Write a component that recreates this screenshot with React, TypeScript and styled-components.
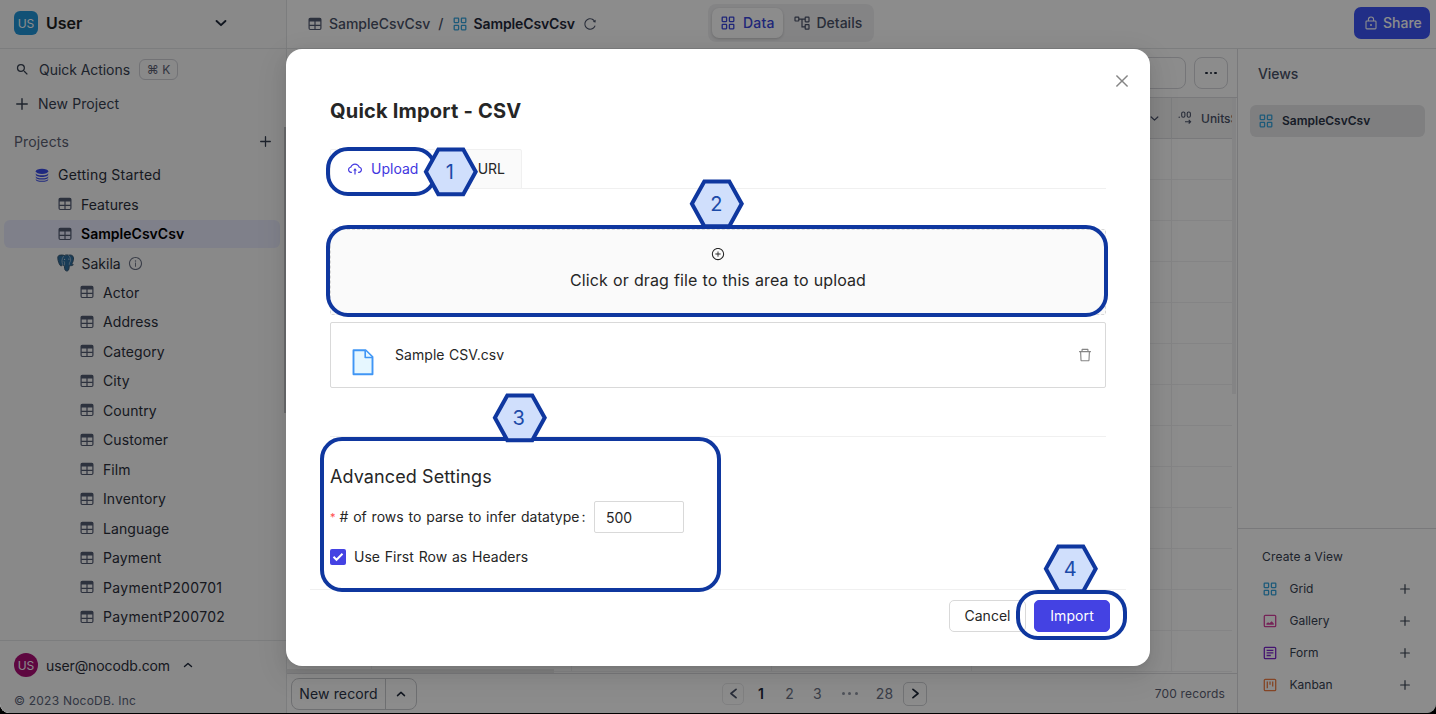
import React from 'react';
import styled, { createGlobalStyle } from 'styled-components';
import {
  AiOutlineCloudUpload,
  AiOutlineDelete,
  AiOutlineClose,
  AiOutlinePlusCircle,
  AiOutlineReload,
  AiOutlineInfoCircle,
} from 'react-icons/ai';
import { MdSearch } from 'react-icons/md';

const GlobalStyle = createGlobalStyle`
  * { box-sizing: border-box; }
  html, body { margin: 0; background: #000; }
  body { font-family: Inter, "Liberation Sans", sans-serif; font-size: 14px; color: #1f293a; overflow: hidden; }
  svg { display: block; flex: none; }
`;

/* ---------- icons ---------- */

type IconProps = { size?: number; color?: string };

const TableIcon = ({ size = 14, color = '#535b72' }: IconProps) => (
  <svg width={size} height={size} viewBox="0 0 14 14" fill="none">
    <rect x="1.1" y="1.4" width="11.8" height="11.1" rx="1.2" stroke={color} strokeWidth="1.2" />
    <path d="M1 2.2C1 1.5 1.5 1 2.2 1h9.6c.7 0 1.2.5 1.2 1.2v2.2H1z" fill={color} />
    <path d="M1.2 8.4h11.6M7 4v8.4" stroke={color} strokeWidth="1.2" />
  </svg>
);

const GridIcon = ({ size = 14, color = '#36a4dd' }: IconProps) => (
  <svg width={size} height={size} viewBox="0 0 14 14" fill="none" stroke={color} strokeWidth="1.3">
    <rect x="1.2" y="1.2" width="4.4" height="4.4" rx=".5" />
    <rect x="8.4" y="1.2" width="4.4" height="4.4" rx=".5" />
    <rect x="1.2" y="8.4" width="4.4" height="4.4" rx=".5" />
    <rect x="8.4" y="8.4" width="4.4" height="4.4" rx=".5" />
  </svg>
);

const TreeIcon = ({ color = '#4a5268' }: IconProps) => (
  <svg width="16" height="14" viewBox="0 0 16 14" fill="none" stroke={color} strokeWidth="1.2">
    <rect x="1" y="1.2" width="3.8" height="3.8" rx=".5" />
    <rect x="11.2" y="1.2" width="3.8" height="4.6" rx=".5" />
    <rect x="11.2" y="8.6" width="3.8" height="4.6" rx=".5" />
    <path d="M4.8 3.2h6.4M8 3.2v7.6h3.2" />
  </svg>
);

const Plus = ({ size = 11, color = '#374151' }: IconProps) => (
  <svg width={size} height={size} viewBox="0 0 11 11" stroke={color} strokeWidth="1.3" strokeLinecap="round">
    <path d="M5.5.7v9.6M.7 5.5h9.6" />
  </svg>
);

const chevronPaths = {
  down: 'M1.300 3.300l3.700 3.500 3.700-3.500',
  up: 'M1.500 6.600L5 3.400l3.500 3.200',
  left: 'M7.300 1.200L2.700 5l4.600 3.800',
  right: 'M2.700 1.200L7.300 5 2.700 8.800',
};

type ChevronProps = { dir?: keyof typeof chevronPaths; width?: number; color?: string; weight?: number };

const Chevron = ({ dir = 'down', width = 10, color = '#1f293a', weight = 1.6 }: ChevronProps) => (
  <svg width={width} height={width} viewBox="0 0 10 10" fill="none" stroke={color} strokeWidth={weight} strokeLinecap="round" strokeLinejoin="round">
    <path d={chevronPaths[dir]} />
  </svg>
);

const Database = () => (
  <svg width="14" height="14" viewBox="0 0 14 14" fill="#3a4be8">
    <ellipse cx="7" cy="3.300" rx="6.200" ry="2.600" />
    <path d="M.8 4.900c0 1.600 2.800 2.300 6.200 2.300s6.200-.7 6.200-2.300v1.500c0 1.500-2.800 2.500-6.200 2.500S.8 7.900.8 6.400z" />
    <path d="M.8 7.900c0 1.600 2.800 2.300 6.200 2.300s6.200-.7 6.200-2.300v1.300c0 1.500-2.800 2.400-6.200 2.400S.8 10.700.8 9.200z" />
    <path d="M.8 10.500c0 1.600 2.800 2.300 6.200 2.300s6.200-.7 6.200-2.300v.9c0 1.500-2.800 2.400-6.200 2.400s-6.200-.9-6.200-2.400z" />
  </svg>
);

const Elephant = () => (
  <svg width="17" height="18" viewBox="0 0 17 18" fill="none" strokeLinejoin="round" strokeLinecap="round">
    <path
      d="M4.200 1.200C2 .6.600 2 .8 4.300c.2 2.500 1.300 6 2.500 7.200.8.800 1.600.1 2.200-.6.500.5 1.200.6 1.800.5.300 1.900.1 4.200 1.300 5.200 1.300.9 3 .2 3.300-1.700l.4-3.300c1.400.3 3.300 0 4-.9-.8-.2-1.300-.3-1.400-.8 1.100-2 1.800-4.400 1.600-6.200C16.200 1.600 14 .5 11.700 1.200 10.300.7 8.700.8 7.500 1.500 6.400 1 5.200.9 4.200 1.200z"
      fill="#2f6e9f"
      stroke="#3a5a73"
      strokeWidth="1"
    />
    <path d="M5.600 10.500c-.9-2.500-1.100-5.600.8-8M11.800 1.500c1.700 1.600 2.500 4.300 1.400 6.200-.4.800-.9 1.200-.9 2.600M7.400 11c.1-1.500.5-2.200-.2-3.400" stroke="#b9cbd8" strokeWidth=".7" />
    <circle cx="7.600" cy="5.300" r=".6" fill="#d5e0e8" />
    <circle cx="11.900" cy="5.100" r=".6" fill="#d5e0e8" />
  </svg>
);

const Lock = () => (
  <svg width="12" height="14" viewBox="0 0 12 14" fill="none" stroke="#fff" strokeWidth="1.100">
    <rect x="1" y="5" width="10" height="7.900" rx=".8" />
    <path d="M3.400 5V3.600a2.600 2.600 0 0 1 5.200 0V5" />
    <circle cx="6" cy="9" r="1" fill="#fff" stroke="none" />
  </svg>
);

const DecimalIcon = () => (
  <svg width="14" height="14" viewBox="0 0 14 14" fill="none" stroke="#4a5268" strokeWidth="1.100">
    <circle cx="1.200" cy="6.300" r=".7" fill="#4a5268" stroke="none" />
    <rect x="3.700" y="1" width="3.200" height="5.200" rx="1.500" />
    <rect x="9.200" y="1" width="3.200" height="5.200" rx="1.500" />
    <path d="M7 10.700h5.600M10.700 8.900l1.900 1.800-1.900 1.800" />
  </svg>
);

const GalleryIcon = () => (
  <svg width="14" height="14" viewBox="0 0 14 14" fill="none">
    <rect x="1.300" y="1.300" width="11.400" height="11.400" rx="1" stroke="#d6409f" strokeWidth="1.300" />
    <path d="M3.400 10.700V9.500l1.700-1.300 1.300 1.100 2.300-2 2.100 2.200v1.200z" fill="#d6409f" />
  </svg>
);

const FormIcon = () => (
  <svg width="14" height="14" viewBox="0 0 14 14" fill="none" stroke="#7d26cd" strokeWidth="1.300">
    <rect x="1.300" y="1.300" width="11.400" height="11.400" rx="1" />
    <path d="M3.600 4.300h6.800M3.600 6.900h6.800M3.600 9.500h4.200" />
  </svg>
);

const KanbanIcon = () => (
  <svg width="14" height="14" viewBox="0 0 14 14" fill="none" stroke="#f07f45" strokeWidth="1.300">
    <rect x="1.300" y="1.300" width="11.400" height="11.400" rx="1" />
    <path d="M4.300 3.600v6.600M7 3.600v3.200M9.700 3.600v4.800" />
  </svg>
);

const FileIcon = () => (
  <svg width="22" height="27" viewBox="0 0 22 27" fill="#e6f7ff" stroke="#4096f5" strokeWidth="1.900" strokeLinejoin="round">
    <path d="M1.500 1.300h12.300l6.700 6.700v17.200h-19z" />
    <path d="M13.200 1.500v7h7" strokeWidth="1.600" />
  </svg>
);

/* ---------- page frame ---------- */

const Window = styled.div`
  position: relative;
  display: flex;
  width: 1436px;
  height: 713px;
  background: #fff;
  border-radius: 0 0 9px 9px;
  overflow: hidden;
`;

const Label = styled.span<{ ls?: number; ws?: number }>`
  white-space: nowrap;
  letter-spacing: ${(p) => p.ls ?? 0.15}px;
  word-spacing: ${(p) => p.ws ?? 0}px;
`;

/* ---------- sidebar ---------- */

const Sidebar = styled.aside`
  position: relative;
  display: flex;
  flex-direction: column;
  flex: none;
  width: 287px;
  background: #f9f9fa;
  border-right: 1px solid #e2e3e6;
`;

const Workspace = styled.div`
  display: flex;
  align-items: center;
  height: 49px;
  padding: 0 59px 2px 14px;
  border-bottom: 1px solid #e2e3e6;
  font-size: 16px;
  font-weight: 600;
  color: #1f1f1f;
  ${Label} { flex: 1; margin-left: 8px; }
`;

const Avatar = styled.div<{ round?: boolean }>`
  display: flex;
  align-items: center;
  justify-content: center;
  width: 24px;
  height: 24px;
  border-radius: ${(p) => (p.round ? '50%' : '6px')};
  background: ${(p) => (p.round ? '#ab0d76' : '#1f94d8')};
  color: #fff;
  font-size: 12px;
  font-weight: 400;
`;

const Action = styled.div<{ indent: number; gap: number; h: number }>`
  display: flex;
  align-items: center;
  gap: ${(p) => p.gap}px;
  height: ${(p) => p.h}px;
  padding-left: ${(p) => p.indent}px;
  color: #374151;
`;

const Kbd = styled.kbd`
  display: flex;
  align-items: center;
  justify-content: center;
  width: 39px;
  height: 21px;
  border: 1px solid #cfd0d6;
  border-radius: 6px;
  font: 12px Inter, "DejaVu Sans", sans-serif;
  color: #5b6072;
`;

const SectionTitle = styled.div`
  display: flex;
  align-items: center;
  justify-content: space-between;
  height: 37px;
  margin-top: 6px;
  padding: 0 15px 0 14px;
  color: #5b6072;
`;

const Tree = styled.div`
  display: flex;
  flex-direction: column;
  padding: 0.600px 6px 0 4px;
`;

const TreeRow = styled.div<{ depth: number; active?: boolean; gap?: number }>`
  display: flex;
  align-items: center;
  gap: ${(p) => p.gap ?? 9}px;
  height: 28px;
  margin-bottom: 1.470px;
  padding-left: ${(p) => p.depth}px;
  border-radius: 6px;
  background: ${(p) => (p.active ? '#e7e9fc' : 'transparent')};
  color: ${(p) => (p.active ? '#000' : '#2b2f3a')};
  font-weight: ${(p) => (p.active ? 600 : 400)};
`;

const ScrollThumb = styled.div`
  position: absolute;
  right: 0;
  top: 127px;
  width: 2px;
  height: 286px;
  background: #c4c5c9;
`;

const SidebarFooter = styled.footer`
  height: 73px;
  margin-top: auto;
  padding: 12px 14px 0;
  border-top: 1px solid #e2e3e6;
`;

const UserLine = styled.div`
  display: flex;
  align-items: center;
  gap: 8px;
  color: #2b2f3a;
  ${Label} { margin-right: 5px; }
`;

const Copyright = styled.div`
  margin-top: 16px;
  font-size: 12px;
  line-height: 15px;
  letter-spacing: 0.22px;
  color: #5b6478;
`;

/* ---------- main area ---------- */

const Main = styled.main`
  display: flex;
  flex-direction: column;
  flex: 1;
  min-width: 0;
`;

const Topbar = styled.header`
  display: grid;
  grid-template-columns: 421px 1fr auto;
  align-items: center;
  height: 49px;
  padding: 0 6px 2px 0;
  border-bottom: 1px solid #e2e3e6;
`;

const Crumbs = styled.nav`
  display: flex;
  align-items: center;
  padding: 1px 0 0 21px;
  font-weight: 500;
  color: #4a5268;
  ${Label} { margin: 0 8px 0 7px; }
  ${Label} + span { margin-right: 9px; }
`;

const CurrentCrumb = styled(Label)`
  color: #1f293a;
  font-weight: 600;
`;

const Segment = styled.div`
  display: flex;
  justify-self: start;
  width: 166px;
  height: 38px;
  padding: 4px;
  border-radius: 8px;
  background: #f1f1f3;
`;

const SegmentItem = styled.div<{ on?: boolean }>`
  display: flex;
  align-items: center;
  gap: ${(p) => (p.on ? 8 : 7)}px;
  width: ${(p) => (p.on ? '71px' : 'auto')};
  padding: 0 0 1px ${(p) => (p.on ? 9 : 10.5)}px;
  border-radius: 7px;
  font-weight: 500;
  background: ${(p) => (p.on ? '#fff' : 'transparent')};
  box-shadow: ${(p) => (p.on ? '0 1px 3px rgba(0,0,0,.2)' : 'none')};
  color: ${(p) => (p.on ? '#3a46dc' : '#4a5268')};
`;

const ShareButton = styled.button`
  display: flex;
  align-items: center;
  gap: 6px;
  width: 76px;
  height: 32px;
  padding: 0 0 1px 11px;
  border: 0;
  border-radius: 7px;
  background: #3c54f6;
  color: #fff;
  font: 500 14px Inter, sans-serif;
`;

const Body = styled.div`
  display: flex;
  flex: 1;
  min-height: 0;
`;

const GridPane = styled.section`
  display: flex;
  flex-direction: column;
  width: 950px;
`;

const Toolbar = styled.div`
  display: flex;
  align-items: center;
  justify-content: flex-end;
  gap: 8px;
  height: 48px;
  padding-right: 9px;
`;

const ToolButton = styled.div<{ w: number }>`
  display: flex;
  align-items: center;
  justify-content: ${(p) => (p.w > 40 ? 'flex-end' : 'center')};
  width: ${(p) => p.w}px;
  height: 32px;
  padding-right: ${(p) => (p.w > 40 ? 31.5 : 0)}px;
  border: 1px solid #d5d6da;
  border-radius: 8px;
  background: #fff;
`;

const Dots = styled.span<{ size: number; gap: number; color: string }>`
  display: flex;
  gap: ${(p) => p.gap}px;
  i { width: ${(p) => p.size}px; height: ${(p) => p.size}px; border-radius: 50%; background: ${(p) => p.color}; }
`;

const Sheet = styled.div`
  display: flex;
  height: 576px;
  border-top: 1px solid #dcdde0;
`;

const Cells = styled.div`
  display: grid;
  grid-template-columns: 85px repeat(4, 200px) 60px;
  grid-template-rows: 41px repeat(13, 41px);
  width: 945px;
  height: 575px;
  overflow: hidden;
`;

const Cell = styled.div<{ head?: boolean }>`
  display: flex;
  align-items: center;
  overflow: hidden;
  white-space: nowrap;
  border-right: 1px solid ${(p) => (p.head ? '#e2e3e6' : '#f0f0f2')};
  border-bottom: 1px solid ${(p) => (p.head ? '#dcdde0' : '#f0f0f2')};
  background: ${(p) => (p.head ? '#f4f4f5' : '#fff')};
  font-size: 12px;
  font-weight: 500;
  color: #4a5268;
  &:nth-child(6n) { border-right: 0; }
`;

const HeadEnd = styled.div`
  margin-left: auto;
  margin-right: 12px;
`;

const HeadLabel = styled.div`
  display: flex;
  align-items: center;
  gap: 9px;
  padding-left: 6px;
`;

const Track = styled.div`
  width: 5px;
  padding-right: 1px;
  background: #fff;
`;

const Thumb = styled.div`
  height: 296px;
  background: #f1f1f3;
`;

const HorizontalThumb = styled.div`
  width: 267px;
  height: 4px;
  margin-top: -4px;
  background: #eaeaec;
`;

const GridFooter = styled.footer`
  display: grid;
  grid-template-columns: 426px 1fr auto;
  align-items: center;
  height: 40px;
  padding: 0 12px 0 4px;
  border-top: 1px solid #dcdde0;
`;

const NewRecord = styled.div`
  display: flex;
  width: 126px;
  height: 32px;
  border: 1px solid #c9cace;
  border-radius: 8px;
  color: #2b3447;
`;

const NewRecordPart = styled.div<{ w: number }>`
  display: flex;
  align-items: center;
  justify-content: center;
  width: ${(p) => p.w}px;
  ${Label} { padding-bottom: 1px; }
  & + & { border-left: 1px solid #c9cace; }
`;

const Pager = styled.div`
  display: flex;
  align-items: center;
  color: #6a7184;
`;

const PageStep = styled.div<{ dim?: boolean }>`
  display: flex;
  align-items: center;
  justify-content: center;
  width: ${(p) => (p.dim ? 22 : 24)}px;
  height: ${(p) => (p.dim ? 22 : 24)}px;
  margin-left: ${(p) => (p.dim ? 5 : -1)}px;
  border: 1px solid ${(p) => (p.dim ? '#e9eaec' : '#d0d1d5')};
  border-radius: 5px;
`;

const PageNumber = styled.span<{ w: number; current?: boolean }>`
  display: flex;
  justify-content: center;
  width: ${(p) => p.w}px;
  letter-spacing: 0.2px;
  font-weight: ${(p) => (p.current ? 600 : 400)};
  color: ${(p) => (p.current ? '#1f293a' : '#6a7184')};
`;

const Records = styled.span`
  font-size: 12px;
  letter-spacing: 0.15px;
  color: #5b6072;
`;

/* ---------- views panel ---------- */

const ViewsPanel = styled.aside`
  display: flex;
  flex-direction: column;
  flex: 1;
  border-left: 1px solid #dcdde0;
`;

const ViewsTitle = styled.h2`
  margin: 16px 0 0 20px;
  font-size: 14px;
  line-height: 18px;
  font-weight: 500;
  letter-spacing: -0.1px;
  color: #4a5268;
`;

const ViewItem = styled.div`
  display: flex;
  align-items: center;
  gap: 9px;
  width: 175px;
  height: 32px;
  margin: 22px 0 0 12px;
  padding: 0 0 1px 9px;
  border-radius: 6px;
  background: #e8e8ea;
  font-size: 12px;
  font-weight: 600;
  color: #2b3447;
`;

const CreateViews = styled.div`
  height: 185px;
  margin-top: auto;
  padding: 20px 26px 0 25px;
  border-top: 1px solid #dcdde0;
  font-size: 12px;
  color: #374151;
`;

const CreateRow = styled.div`
  display: flex;
  align-items: center;
  height: 32px;
  ${Label} { flex: 1; margin-left: 12.500px; padding-bottom: 1px; }
`;

const CreateTitle = styled.div`
  height: 24px;
  margin-left: -1px;
  line-height: 15px;
  letter-spacing: 0.15px;
`;

/* ---------- modal ---------- */

const Mask = styled.div`
  position: absolute;
  inset: 0;
  background: rgba(0, 0, 0, 0.45);
`;

const Modal = styled.div`
  position: absolute;
  left: 286px;
  top: 49px;
  width: 864px;
  height: 617px;
  padding: 0 24px;
  border-radius: 16px;
  background: #fff;
  box-shadow: 0 3px 6px -4px rgba(0, 0, 0, 0.12), 0 6px 16px rgba(0, 0, 0, 0.08), 0 9px 28px 8px rgba(0, 0, 0, 0.05);
  color: #262626;
`;

const CloseButton = styled.div`
  display: flex;
  justify-content: flex-end;
  padding: 23px 19px 0 0;
  margin-right: -24px;
  height: 47px;
  color: #858585;
`;

const Content = styled.div`
  display: flex;
  flex-direction: column;
  height: 493px;
  padding: 0 20px;
`;

const Title = styled.h1`
  margin: 1px 0 0;
  font-size: 20px;
  line-height: 28px;
  font-weight: 700;
  letter-spacing: 0.2px;
`;

const Tabs = styled.div`
  display: flex;
  gap: 2px;
  height: 40px;
  margin-top: 24px;
  border-bottom: 1px solid #f0f0f0;
`;

const Tab = styled.div<{ w: number; active?: boolean }>`
  display: flex;
  align-items: center;
  justify-content: ${(p) => (p.active ? 'flex-start' : 'flex-end')};
  gap: 8px;
  width: ${(p) => p.w}px;
  height: 40px;
  padding: 0 16px 1px;
  border: 1px solid #f0f0f0;
  border-bottom-color: ${(p) => (p.active ? '#fff' : '#f0f0f0')};
  border-radius: 2px 2px 0 0;
  background: ${(p) => (p.active ? '#fff' : '#fafafa')};
  color: ${(p) => (p.active ? '#4237e0' : '#262626')};
`;

const DropZone = styled.div`
  display: flex;
  flex-direction: column;
  align-items: center;
  height: 86px;
  margin-top: 40px;
  padding-top: 17px;
  border: 1px dashed #d9d9d9;
  border-radius: 2px;
  background: #fafafa;
  font-size: 16px;
  line-height: 24px;
  svg { margin-bottom: 7px; }
`;

const FileRow = styled.div`
  display: flex;
  align-items: center;
  height: 66px;
  margin-top: 7px;
  padding: 0 12px 0 21px;
  border: 1px solid #d9d9d9;
  border-radius: 2px;
  ${Label} { flex: 1; margin-left: 21px; padding-bottom: 1px; }
  > svg:first-child { margin-top: 14px; }
`;

const Settings = styled.section`
  margin-top: 48px;
  padding-top: 28px;
  border-top: 1px solid #f0f0f0;
`;

const SettingsTitle = styled.h3`
  margin: 0;
  font-size: 18px;
  line-height: 24px;
  font-weight: 400;
`;

const SettingLine = styled.div<{ top: number }>`
  display: flex;
  align-items: center;
  height: 32px;
  margin-top: ${(p) => p.top}px;
  ${Label} { padding-bottom: 1px; }
`;

const Required = styled.span`
  width: 9.500px;
  font-size: 11px;
  color: #ff4d4f;
`;

const FieldName = styled.div`
  display: flex;
  gap: 2px;
  width: 246.500px;
`;

const NumberInput = styled.div`
  display: flex;
  align-items: center;
  width: 90px;
  height: 32px;
  margin-left: 8px;
  padding: 1px 0 0 11px;
  border: 1px solid #d9d9d9;
  border-radius: 2px;
`;

const Checkbox = styled.div`
  display: flex;
  align-items: center;
  justify-content: center;
  width: 16px;
  height: 16px;
  margin-right: 8px;
  border-radius: 2px;
  background: #4442e3;
`;

const ModalFooter = styled.footer`
  display: flex;
  justify-content: flex-end;
  gap: 8px;
  height: 53px;
  padding: 10px 16px;
  border-top: 1px solid #f0f0f0;
`;

const Button = styled.button<{ primary?: boolean }>`
  width: ${(p) => (p.primary ? 76 : 77)}px;
  height: 32px;
  padding: 0 0 2px;
  border: 1px solid ${(p) => (p.primary ? '#4442e3' : '#d9d9d9')};
  border-radius: 5px;
  background: ${(p) => (p.primary ? '#4442e3' : '#fff')};
  color: ${(p) => (p.primary ? '#fff' : '#262626')};
  font: 14px Inter, sans-serif;
`;

/* ---------- walkthrough markers ---------- */

const Outline = styled.div<{ x: number; y: number; w: number; h: number }>`
  position: absolute;
  left: ${(p) => p.x}px;
  top: ${(p) => p.y}px;
  width: ${(p) => p.w}px;
  height: ${(p) => p.h}px;
  border: 4px solid #0f379f;
  border-radius: 22px;
`;

const MarkerBox = styled.div<{ x: number; y: number }>`
  position: absolute;
  left: ${(p) => p.x}px;
  top: ${(p) => p.y}px;
  display: grid;
  place-items: center;
  width: 54px;
  height: 50px;
  font-size: 20px;
  color: #1c4aa8;
  > * { grid-area: 1 / 1; }
  svg { overflow: visible; }
  span { z-index: 1; padding-right: 1.500px; }
`;

const Marker = ({ x, y, n }: { x: number; y: number; n: number }) => (
  <MarkerBox x={x} y={y}>
    <svg width="54" height="50" viewBox="0 0 54 50">
      <path d="M14.300 2.600h25L51.700 24.800 39.300 47.200h-25L1.900 24.800z" fill="#d0dffc" stroke="#0f379f" strokeWidth="4" />
    </svg>
    <span>{n}</span>
  </MarkerBox>
);

const tables = ['Actor', 'Address', 'Category', 'City', 'Country', 'Customer', 'Film', 'Inventory', 'Language', 'Payment', 'PaymentP200701', 'PaymentP200702'];

const views = [
  { name: 'Grid', icon: <GridIcon /> },
  { name: 'Gallery', icon: <GalleryIcon /> },
  { name: 'Form', icon: <FormIcon /> },
  { name: 'Kanban', icon: <KanbanIcon /> },
];

export default function App() {
  return (
    <>
      <GlobalStyle />
      <Window>
        <Sidebar>
          <Workspace>
            <Avatar>US</Avatar>
            <Label ls={0}>User</Label>
            <Chevron width={12} />
          </Workspace>
          <Action indent={15} gap={9} h={41}>
            <MdSearch size={15} />
            <Label ls={-0.05}>Quick Actions</Label>
            <Kbd>⌘ K</Kbd>
          </Action>
          <Action indent={16} gap={10} h={27}>
            <Plus size={12} />
            <Label ls={0.07}>New Project</Label>
          </Action>
          <SectionTitle>
            <Label>Projects</Label>
            <Plus />
          </SectionTitle>
          <Tree>
            <TreeRow depth={31}><Database /><Label ls={0.22}>Getting Started</Label></TreeRow>
            <TreeRow depth={54}><TableIcon /><Label ls={0.05}>Features</Label></TreeRow>
            <TreeRow depth={54} active><TableIcon /><Label ls={0.02}>SampleCsvCsv</Label></TreeRow>
            <TreeRow depth={53} gap={7.5}>
              <Elephant />
              <Label ls={0}>Sakila</Label>
              <AiOutlineInfoCircle size={15} color="#6a7184" />
            </TreeRow>
            {tables.map((t) => (
              <TreeRow key={t} depth={76}><TableIcon /><Label ls={t.length > 12 ? 0.32 : 0.1}>{t}</Label></TreeRow>
            ))}
          </Tree>
          <SidebarFooter>
            <UserLine>
              <Avatar round>US</Avatar>
              <Label ls={-0.1}>user@nocodb.com</Label>
              <Chevron dir="up" weight={1.4} />
            </UserLine>
            <Copyright>© 2023 NocoDB. Inc</Copyright>
          </SidebarFooter>
          <ScrollThumb />
        </Sidebar>

        <Main>
          <Topbar>
            <Crumbs>
              <TableIcon />
              <Label ls={-0.02}>SampleCsvCsv</Label>
              <span>/</span>
              <GridIcon />
              <CurrentCrumb ls={-0.12}>SampleCsvCsv</CurrentCrumb>
              <AiOutlineReload size={14} />
            </Crumbs>
            <Segment>
              <SegmentItem on><GridIcon color="#3a46dc" /><Label ls={0.2}>Data</Label></SegmentItem>
              <SegmentItem><TreeIcon /><Label ls={0}>Details</Label></SegmentItem>
            </Segment>
            <ShareButton><Lock />Share</ShareButton>
          </Topbar>
          <Body>
            <GridPane>
              <Toolbar>
                <ToolButton w={110}>Add Record</ToolButton>
                <ToolButton w={34}><Dots size={2.5} gap={2} color="#1f293a"><i /><i /><i /></Dots></ToolButton>
              </Toolbar>
              <Sheet>
                <Cells>
                  {Array.from({ length: 84 }, (_, i) => (
                    <Cell key={i} head={i < 6}>
                      {i === 4 && <HeadEnd><Chevron width={9} color="#4a5268" weight={1.4} /></HeadEnd>}
                      {i === 5 && <HeadLabel><DecimalIcon />UnitsSold</HeadLabel>}
                    </Cell>
                  ))}
                </Cells>
                <Track><Thumb /></Track>
              </Sheet>
              <HorizontalThumb />
              <GridFooter>
                <NewRecord>
                  <NewRecordPart w={93}><Label>New record</Label></NewRecordPart>
                  <NewRecordPart w={31}><Chevron dir="up" weight={1.5} /></NewRecordPart>
                </NewRecord>
                <Pager>
                  <PageStep dim><Chevron dir="left" width={11} color="#4a5268" /></PageStep>
                  <PageNumber w={34} current>1</PageNumber>
                  <PageNumber w={23}>2</PageNumber>
                  <PageNumber w={33}>3</PageNumber>
                  <PageNumber w={31}><Dots size={3} gap={3.500} color="#8f95a3"><i /><i /><i /></Dots></PageNumber>
                  <PageNumber w={39}>28</PageNumber>
                  <PageStep><Chevron dir="right" width={11} /></PageStep>
                </Pager>
                <Records>700 records</Records>
              </GridFooter>
            </GridPane>
            <ViewsPanel>
              <ViewsTitle>Views</ViewsTitle>
              <ViewItem><GridIcon />SampleCsvCsv</ViewItem>
              <CreateViews>
                <CreateTitle>Create a View</CreateTitle>
                {views.map((v) => (
                  <CreateRow key={v.name}>{v.icon}<Label ls={0}>{v.name}</Label><Plus size={10} /></CreateRow>
                ))}
              </CreateViews>
            </ViewsPanel>
          </Body>
        </Main>

        <Mask />
        <Modal>
          <CloseButton><AiOutlineClose size={18} /></CloseButton>
          <Content>
            <Title>Quick Import - CSV</Title>
            <Tabs>
              <Tab w={106} active><AiOutlineCloudUpload size={16} /><Label ls={0}>Upload</Label></Tab>
              <Tab w={84}><Label ls={0}>URL</Label></Tab>
            </Tabs>
            <DropZone>
              <AiOutlinePlusCircle size={14} />
              <Label ls={0.1} ws={0.5}>Click or drag file to this area to upload</Label>
            </DropZone>
            <FileRow>
              <FileIcon />
              <Label ls={0.05} ws={0.5}>Sample CSV.csv</Label>
              <AiOutlineDelete size={16} color="#858585" />
            </FileRow>
            <Settings>
              <SettingsTitle><Label ls={0.1}>Advanced Settings</Label></SettingsTitle>
              <SettingLine top={12}>
                <Required>*</Required>
                <FieldName>
                  <Label ls={0.03} ws={0.8}># of rows to parse to infer datatype</Label>
                  <Label>:</Label>
                </FieldName>
                <NumberInput>500</NumberInput>
              </SettingLine>
              <SettingLine top={8}>
                <Checkbox>
                  <svg width="12" height="10" viewBox="0 0 12 10" fill="none" stroke="#fff" strokeWidth="2">
                    <path d="M1.500 4.800l3 3 6-6" />
                  </svg>
                </Checkbox>
                <Label ls={0.03} ws={0.8}>Use First Row as Headers</Label>
              </SettingLine>
            </Settings>
          </Content>
          <ModalFooter>
            <Button><Label ls={0}>Cancel</Label></Button>
            <Button primary><Label ls={0.1}>Import</Label></Button>
          </ModalFooter>
        </Modal>

        <Marker x={690} y={179} n={2} />
        <Marker x={1044} y={544} n={4} />
        <Outline x={326} y={147} w={111} h={49} />
        <Outline x={326} y={225} w={782} h={92} />
        <Outline x={320} y={437} w={401} h={155} />
        <Outline x={1016} y={590} w={111} h={50} />
        <Marker x={423.5} y={147} n={1} />
        <Marker x={492.5} y={393} n={3} />
      </Window>
    </>
  );
}
